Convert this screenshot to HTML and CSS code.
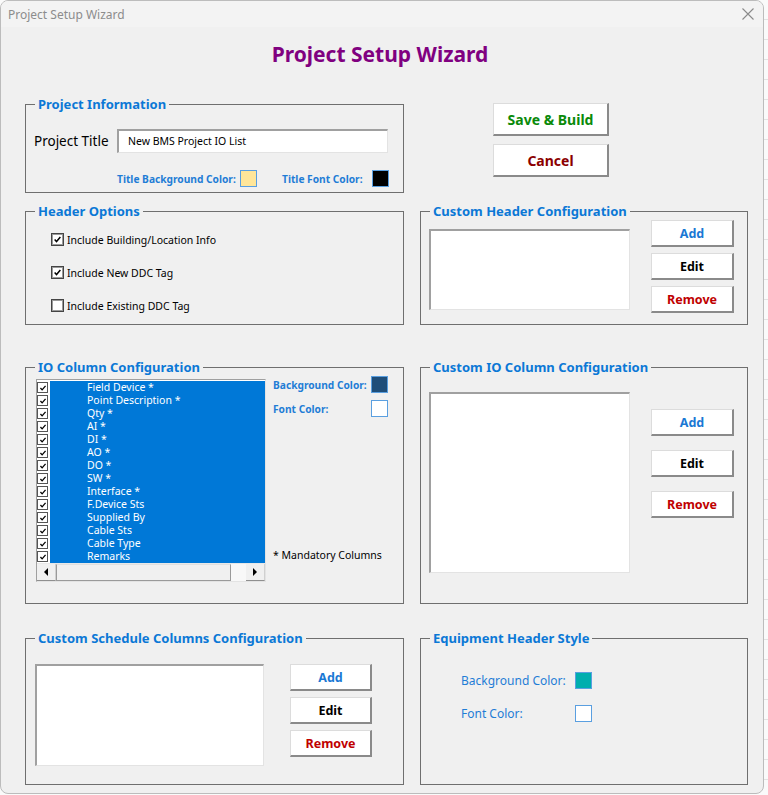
FILE: index.html
```html
<!DOCTYPE html>
<html lang="en">
<head>
  <meta charset="UTF-8">
  <title>Project Setup Wizard</title>
  <link rel="stylesheet" href="styles.css">
</head>
<body>
  <div class="window">
    <!-- title bar -->
    <div class="titlebar">
      <span class="titlebar-text">Project Setup Wizard</span>
      <svg class="close-icon" width="12" height="12" viewBox="0 0 12 12">
        <path d="M0.5 0.5 L11.5 11.5 M11.5 0.5 L0.5 11.5" stroke="#8a8a8a" stroke-width="1.1" fill="none"/>
      </svg>
    </div>

    <h1 class="wizard-title">Project Setup Wizard</h1>

    <!-- row 1 -->
    <div class="row row-1">
      <fieldset class="frame frame-left">
        <legend>Project Information</legend>
        <div class="frame-body body-project">
          <div class="title-row">
            <span class="title-label">Project Title</span>
            <div class="textbox">New BMS Project IO List</div>
          </div>
          <div class="color-row">
            <span class="color-label label-bg">Title Background Color:</span>
            <span class="swatch swatch-yellow"></span>
            <span class="color-label label-font">Title Font Color:</span>
            <span class="swatch swatch-black"></span>
          </div>
        </div>
      </fieldset>
      <div class="actions">
        <button class="btn btn-big btn-save">Save &amp; Build</button>
        <button class="btn btn-big btn-cancel">Cancel</button>
      </div>
    </div>

    <!-- row 2 -->
    <div class="row row-2">
      <fieldset class="frame frame-left">
        <legend>Header Options</legend>
        <div class="frame-body body-header">
          <label class="check-row"><span class="checkbox checked"></span>Include Building/Location Info</label>
          <label class="check-row"><span class="checkbox checked"></span>Include New DDC Tag</label>
          <label class="check-row"><span class="checkbox"></span>Include Existing DDC Tag</label>
        </div>
      </fieldset>
      <fieldset class="frame frame-right">
        <legend>Custom Header Configuration</legend>
        <div class="frame-body body-custom-header">
          <div class="listbox list-custom-header"></div>
          <div class="btn-col">
            <button class="btn btn-add">Add</button>
            <button class="btn btn-edit">Edit</button>
            <button class="btn btn-remove">Remove</button>
          </div>
        </div>
      </fieldset>
    </div>

    <!-- row 3 -->
    <div class="row row-3">
      <fieldset class="frame frame-left">
        <legend>IO Column Configuration</legend>
        <div class="frame-body body-io">
          <div class="listbox io-list">
            <div class="io-items">
              <div class="io-item"><span class="mini-check"></span><span class="io-text">Field Device *</span></div>
              <div class="io-item"><span class="mini-check"></span><span class="io-text">Point Description *</span></div>
              <div class="io-item"><span class="mini-check"></span><span class="io-text">Qty *</span></div>
              <div class="io-item"><span class="mini-check"></span><span class="io-text">AI *</span></div>
              <div class="io-item"><span class="mini-check"></span><span class="io-text">DI *</span></div>
              <div class="io-item"><span class="mini-check"></span><span class="io-text">AO *</span></div>
              <div class="io-item"><span class="mini-check"></span><span class="io-text">DO *</span></div>
              <div class="io-item"><span class="mini-check"></span><span class="io-text">SW *</span></div>
              <div class="io-item"><span class="mini-check"></span><span class="io-text">Interface *</span></div>
              <div class="io-item"><span class="mini-check"></span><span class="io-text">F.Device Sts</span></div>
              <div class="io-item"><span class="mini-check"></span><span class="io-text">Supplied By</span></div>
              <div class="io-item"><span class="mini-check"></span><span class="io-text">Cable Sts</span></div>
              <div class="io-item"><span class="mini-check"></span><span class="io-text">Cable Type</span></div>
              <div class="io-item"><span class="mini-check"></span><span class="io-text">Remarks</span></div>
            </div>
            <div class="hscroll">
              <span class="scroll-btn"><span class="arrow-left"></span></span>
              <span class="scroll-thumb"></span>
              <span class="scroll-track"></span>
              <span class="scroll-btn"><span class="arrow-right"></span></span>
            </div>
          </div>
          <div class="io-side">
            <div class="side-row">
              <span class="color-label side-label">Background Color:</span>
              <span class="swatch swatch-navy"></span>
            </div>
            <div class="side-row">
              <span class="color-label side-label">Font Color:</span>
              <span class="swatch swatch-white"></span>
            </div>
            <p class="mandatory">* Mandatory Columns</p>
          </div>
        </div>
      </fieldset>
      <fieldset class="frame frame-right">
        <legend>Custom IO Column Configuration</legend>
        <div class="frame-body body-custom-io">
          <div class="listbox list-custom-io"></div>
          <div class="btn-col btn-col-wide">
            <button class="btn btn-add">Add</button>
            <button class="btn btn-edit">Edit</button>
            <button class="btn btn-remove">Remove</button>
          </div>
        </div>
      </fieldset>
    </div>

    <!-- row 4 -->
    <div class="row row-4">
      <fieldset class="frame frame-left">
        <legend>Custom Schedule Columns Configuration</legend>
        <div class="frame-body body-schedule">
          <div class="listbox list-schedule"></div>
          <div class="btn-col btn-col-schedule">
            <button class="btn btn-add">Add</button>
            <button class="btn btn-edit">Edit</button>
            <button class="btn btn-remove">Remove</button>
          </div>
        </div>
      </fieldset>
      <fieldset class="frame frame-right">
        <legend>Equipment Header Style</legend>
        <div class="frame-body body-equipment">
          <div class="eq-row">
            <span class="eq-label">Background Color:</span>
            <span class="swatch swatch-teal"></span>
          </div>
          <div class="eq-row">
            <span class="eq-label">Font Color:</span>
            <span class="swatch swatch-white"></span>
          </div>
        </div>
      </fieldset>
    </div>
  </div>
</body>
</html>
```

FILE: styles.css
```css
/* page behind the dialog */
body {
  margin: 0;
  background: #fafafa repeating-linear-gradient(to bottom, transparent 0, transparent 19px, #e2e2e2 19px, #e2e2e2 20px);
  font-family: "Noto Sans", "Liberation Sans", sans-serif;
  color: #000;
}
.window {
  width: 764px;
  height: 794px;
  box-sizing: border-box;
  border: 1px solid #bcbcbc;
  border-radius: 8px;
  background: #f0f0f0;
  overflow: hidden;
}
/* title bar */
.titlebar {
  height: 26px;
  background: #f3f3f3;
  display: flex;
  align-items: center;
  justify-content: space-between;
  padding: 0 9px 0 7px;
}
.titlebar-text {
  font-size: 12px;
  color: #8c8c8c;
}
.wizard-title {
  margin: 9px 0 0;
  padding-right: 4px;
  height: 36px;
  line-height: 36px;
  font-size: 21px;
  font-weight: bold;
  color: #800080;
  text-align: center;
}
/* rows of frames */
.row {
  display: flex;
  gap: 16px;
  margin-left: 24px;
}
.row-1 { margin-top: 23px; }
.row-2 { margin-top: 9px; }
.row-3 { margin-top: 33px; }
.row-4 { margin-top: 25px; }

.frame {
  box-sizing: border-box;
  margin: 0;
  padding: 0;
  min-width: 0;
  border: 1px solid #6f6f6f;
}
.frame legend {
  margin-left: 9px;
  padding: 0 3px;
  font-size: 13px;
  line-height: 18px;
  font-weight: bold;
  color: #0b78d6;
}
.frame-left { width: 379px; }
.frame-right { width: 328px; }
.row-1 .frame { height: 98px; }
.row-2 .frame { height: 123px; }
.row-3 .frame { height: 246px; }
.row-4 .frame { height: 156px; }

.frame-body {
  display: flex;
  align-items: flex-start;
}

/* project information */
.body-project {
  flex-direction: column;
  padding-left: 8px;
}
.title-row {
  display: flex;
  align-items: center;
  margin-top: 16px;
}
.title-label {
  width: 83px;
  font-size: 13.5px;
}
.textbox {
  box-sizing: border-box;
  width: 271px;
  height: 24px;
  background: #fff;
  border-top: 2px solid #a0a0a0;
  border-left: 2px solid #a0a0a0;
  border-right: 1px solid #e3e3e3;
  border-bottom: 1px solid #e3e3e3;
  padding-left: 9px;
  font-size: 10.5px;
  line-height: 21px;
}
.color-row {
  display: flex;
  align-items: center;
  margin-top: 17px;
  padding-left: 83px;
}
.color-label {
  font-size: 10.2px;
  font-weight: bold;
  color: #1f7dd6;
  white-space: nowrap;
}
.label-bg { width: 123px; }
.label-font { width: 90px; margin-left: 25px; }
.swatch {
  box-sizing: border-box;
  width: 17px;
  height: 17px;
  border: 1px solid #5a9fe0;
  flex: none;
}
.swatch-yellow { background: #ffe699; }
.swatch-black { background: #000; }
.swatch-navy { background: #1f4e79; }
.swatch-white { background: #fff; }
.swatch-teal { background: #00aeae; }

/* buttons */
.actions {
  display: flex;
  flex-direction: column;
  gap: 8px;
  padding: 8px 0 0 73px;
}
.btn {
  box-sizing: border-box;
  width: 83px;
  height: 27px;
  background: #fff;
  border-top: 1px solid #dcdcdc;
  border-left: 1px solid #dcdcdc;
  border-right: 2px solid #8a8a8a;
  border-bottom: 2px solid #8a8a8a;
  font-family: inherit;
  font-size: 12.5px;
  font-weight: bold;
  padding: 0;
  cursor: pointer;
}
.btn-big {
  width: 116px;
  height: 33px;
  font-size: 14px;
}
.btn-save { color: #0a8a0a; }
.btn-cancel { color: #8b0000; }
.btn-add { color: #1a78d4; }
.btn-edit { color: #000; }
.btn-remove { color: #c00000; }

/* header options */
.body-header {
  flex-direction: column;
  gap: 20px;
  padding: 13px 0 0 25px;
}
.check-row {
  display: flex;
  align-items: center;
  height: 13px;
  font-size: 10.5px;
}
.checkbox {
  box-sizing: border-box;
  width: 13px;
  height: 13px;
  margin-right: 3px;
  border: 1px solid #444;
  box-shadow: inset 0 0 0 1px #9a9a9a;
  background: #fff;
  flex: none;
}
.checkbox.checked,
.mini-check {
  background: #fff url("data:image/svg+xml,%3Csvg xmlns='http://www.w3.org/2000/svg' viewBox='0 0 11 11'%3E%3Cpath d='M2 5.5 L4.3 8 L9 2.5' stroke='%23000' stroke-width='1.8' fill='none'/%3E%3C/svg%3E") center / 9px 9px no-repeat;
}

/* list boxes */
.listbox {
  box-sizing: border-box;
  background: #fff;
  border-top: 2px solid #a0a0a0;
  border-left: 2px solid #a0a0a0;
  border-right: 1px solid #e3e3e3;
  border-bottom: 1px solid #e3e3e3;
  flex: none;
}
.body-custom-header { padding-left: 8px; }
.list-custom-header {
  width: 201px;
  height: 81px;
  margin-top: 9px;
}
.btn-col {
  display: flex;
  flex-direction: column;
  gap: 6px;
  margin-left: 21px;
}
.body-custom-io { padding-left: 8px; }
.list-custom-io {
  width: 201px;
  height: 181px;
  margin-top: 16px;
}
.btn-col-wide {
  gap: 14px;
  padding-top: 33px;
}
.body-schedule { padding-left: 9px; }
.list-schedule {
  width: 229px;
  height: 102px;
  margin-top: 17px;
}
.btn-col-schedule {
  margin: 17px 0 0 26px;
  width: 82px;
}
.btn-col-schedule .btn { width: 82px; }

/* IO column list */
.body-io { padding-left: 10px; }
.io-list {
  width: 230px;
  margin-top: 3px;
  border-top-width: 1px;
  border-left-width: 1px;
}
.io-items {
  padding-top: 1px;
}
.io-item {
  display: flex;
  height: 13px;
}
.mini-check {
  box-sizing: border-box;
  width: 11px;
  height: 11px;
  margin: 1px 2px 1px 0;
  border: 1px solid #555;
  background-size: 8px 8px;
  flex: none;
}
.io-text {
  flex: 1;
  background: #0078d7;
  color: #fff;
  font-size: 10.5px;
  line-height: 13px;
  padding-left: 37px;
  white-space: nowrap;
}
.hscroll {
  display: flex;
  height: 17px;
  border-top: 1px solid #e8e8e8;
}
.scroll-btn {
  width: 18px;
  background: #f0f0f0;
  border-right: 1px solid #d0d0d0;
  border-bottom: 1px solid #8f8f8f;
  display: flex;
  align-items: center;
  justify-content: center;
  flex: none;
}
.scroll-thumb {
  flex: 1;
  background: #f0f0f0;
  border: 1px solid #9a9a9a;
  border-top-color: #e0e0e0;
}
.scroll-track {
  width: 15px;
  background: #f8f8f8;
  flex: none;
}
.arrow-left {
  border-top: 4px solid transparent;
  border-bottom: 4px solid transparent;
  border-right: 4px solid #000;
}
.arrow-right {
  border-top: 4px solid transparent;
  border-bottom: 4px solid transparent;
  border-left: 4px solid #000;
}
.io-side {
  margin-left: 7px;
  display: flex;
  flex-direction: column;
}
.side-row {
  display: flex;
  align-items: center;
}
.side-row + .side-row { margin-top: 7px; }
.side-label { width: 98px; }
.mandatory {
  margin: 130px 0 0;
  font-size: 10.5px;
  line-height: 16px;
  white-space: nowrap;
}

/* equipment header style */
.body-equipment {
  flex-direction: column;
  gap: 16px;
  padding: 25px 0 0 40px;
}
.eq-row {
  display: flex;
  align-items: center;
}
.eq-label {
  width: 114px;
  font-size: 12px;
  color: #1f7dd6;
}
```
